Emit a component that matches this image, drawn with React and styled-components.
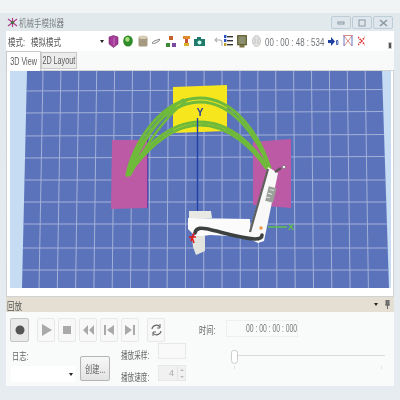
import React from "react";
import styled, { createGlobalStyle, css } from "styled-components";

const Global = createGlobalStyle`
  html, body { margin: 0; padding: 0; background: #e6ecef; }
  * { box-sizing: border-box; }
`;

const condensed = (origin = "left", x = 0.75) => css`
  display: inline-block;
  white-space: nowrap;
  transform: scaleX(${x});
  transform-origin: ${origin} center;
`;

const Page = styled.div`
  width: 400px;
  height: 400px;
  overflow: hidden;
  padding-top: 13px;
  background: linear-gradient(#f1f4f5 0, #f1f4f5 13px, #e2e9ec 13px, #e6ecef 100%);
  font-family: "Liberation Sans", "Noto Sans CJK SC", sans-serif;
  color: #666;
  filter: blur(0.45px);
`;
const TitleBar = styled.div`
  height: 18px;
  display: flex;
  align-items: center;
  padding: 0 7px 0 7px;
`;
const TitleWrap = styled.div`
  flex: 1;
  margin-left: 1px;
`;
const TitleText = styled.span`
  font-size: 10px;
  color: #7d8488;
  ${condensed()}
`;
const WinButton = styled.div`
  width: 20px;
  height: 13px;
  margin-left: 1px;
  margin-top: 1px;
  border: 1px solid #bdcdd8;
  border-radius: 2px;
  background: #dfe7ec;
  display: flex;
  align-items: center;
  justify-content: center;
`;
const Frame = styled.div`
  margin: 0 6px;
  height: 355px;
  display: flex;
  flex-direction: column;
  background: #fbfcfc;
`;
const Toolbar = styled.div`
  height: 20px;
  display: flex;
  align-items: center;
  padding-left: 2px;
  background: #fff;
  position: relative;
`;
const ToolSlot = styled.div`
  width: ${(p) => p.$w}px;
  flex: none;
`;
const ToolLabel = styled.span`
  font-size: 10px;
  color: #555;
  ${condensed()}
`;
const DropArrow = styled.span`
  width: 0;
  height: 0;
  flex: none;
  border-left: 2px solid transparent;
  border-right: 2px solid transparent;
  border-top: 3px solid #222;
`;
const ToolIcon = styled.svg`
  flex: none;
  display: block;
  margin-left: ${(p) => p.$ml || 0}px;
`;
const ClockSlot = styled.div`
  margin-left: 4px;
  width: 60px;
  flex: none;
`;
const Clock = styled.span`
  font-size: 10px;
  color: #6f7479;
  ${condensed("left", 0.79)}
`;
const Overflow = styled.div`
  position: absolute;
  right: 2px;
  top: 11px;
  width: 4px;
  height: 7px;
  background: #555;
  border: 1px solid #ccc;
`;
const TabStrip = styled.div`
  height: 19px;
  display: flex;
  align-items: flex-end;
  background: #f8f9f9;
  position: relative;
  z-index: 1;
`;
const Tab = styled.div`
  height: ${(p) => (p.$active ? 20 : 17)}px;
  width: ${(p) => (p.$active ? 35 : 36)}px;
  margin-bottom: ${(p) => (p.$active ? -1 : 1)}px;
  display: flex;
  align-items: center;
  justify-content: center;
  background: ${(p) => (p.$active ? "#fff" : "#ececec")};
  border: 1px solid #c9c9c9;
  border-bottom: ${(p) => (p.$active ? "none" : "1px solid #c9c9c9")};
`;
const TabText = styled.span`
  font-size: 10px;
  color: #5a5a5a;
  ${condensed("center", 0.72)}
`;
const ViewFrame = styled.div`
  height: 227px;
  padding: 0 2px 8px 3px;
  background: #fff;
  border: 1px solid #d2d2d2;
`;
const Scene = styled.svg`
  display: block;
  width: 381px;
  height: 217px;
  background: #c5dcf2;
`;
const PanelHeader = styled.div`
  height: 15px;
  background: #e5dfd3;
  display: flex;
  align-items: center;
  padding: 0 4px 0 1px;
  gap: 7px;
`;
const PanelTitleWrap = styled.div`
  flex: 1;
`;
const PanelTitle = styled.span`
  font-size: 10px;
  color: #555;
  ${condensed()}
`;
const PanelBody = styled.div`
  height: 74px;
  display: grid;
  grid-template-columns: 193px 1fr;
  background: #f9fafa;
`;
const LeftCol = styled.div`
  padding: 6px 0 0 4px;
  display: flex;
  flex-direction: column;
`;
const ButtonRow = styled.div`
  display: flex;
  height: 25px;
  align-items: flex-start;
`;
const PlayButton = styled.div`
  width: ${(p) => p.$w || 18}px;
  height: 24px;
  margin-left: ${(p) => p.$ml ?? 3}px;
  border: 1px solid ${(p) => (p.$on ? "#c6c6c6" : "#e8e8e8")};
  border-radius: 2px;
  background: ${(p) => (p.$on ? "#e9e9e9" : "#f8f8f8")};
  display: flex;
  align-items: center;
  justify-content: center;
`;
const LowerRow = styled.div`
  display: flex;
  height: 39px;
  padding-left: 1px;
`;
const LogCol = styled.div`
  width: 64px;
  display: flex;
  flex-direction: column;
  justify-content: flex-end;
`;
const FieldLabelSlot = styled.div`
  height: 14px;
  margin: 0 0 4px 1px;
  line-height: 14px;
`;
const FieldLabel = styled.span`
  font-size: 10px;
  color: #666;
  ${condensed("left", 0.72)}
`;
const Select = styled.div`
  height: 16px;
  background: #fff;
  display: flex;
  align-items: center;
  justify-content: flex-end;
  padding-right: 2px;
`;
const CreateButton = styled.div`
  width: 30px;
  height: 25px;
  margin: 13px 0 0 5px;
  border: 1px solid #b5b5b5;
  border-radius: 2px;
  background: linear-gradient(#f7f7f7, #e3e3e3);
  display: flex;
  align-items: center;
  justify-content: center;
`;
const CreateText = styled.span`
  font-size: 10px;
  color: #666;
  ${condensed("center", 0.72)}
`;
const FormCol = styled.div`
  margin-left: 11px;
  display: flex;
  flex-direction: column;
  gap: 6px;
`;
const FormRow = styled.div`
  display: flex;
  align-items: center;
  height: 16px;
`;
const FormLabelSlot = styled.div`
  width: 37px;
  padding-top: 6px;
`;
const FormLabel = styled.span`
  font-size: 10px;
  color: #666;
  ${condensed("left", 0.66)}
`;
const Field = styled.div`
  width: 28px;
  height: 16px;
  border: 1px solid #e8e8e8;
  background: ${(p) => (p.$dim ? "#f1f1f1" : "#f9f9f9")};
  display: flex;
  align-items: center;
  justify-content: flex-end;
  font-size: 9px;
  color: #aaa;
`;
const Spin = styled.span`
  width: 8px;
  height: 14px;
  margin-left: 3px;
  border-left: 1px solid #e4e4e4;
  display: flex;
  flex-direction: column;
  align-items: center;
  justify-content: space-around;
`;
const SpinArrow = styled.i`
  width: 0;
  height: 0;
  border-left: 2px solid transparent;
  border-right: 2px solid transparent;
  ${(p) => (p.$up ? "border-bottom" : "border-top")}: 2px solid #bbb;
`;
const RightCol = styled.div`
  display: flex;
  flex-direction: column;
  padding-top: 8px;
`;
const TimeRow = styled.div`
  display: flex;
  align-items: center;
  height: 17px;
`;
const TimeLabelSlot = styled.div`
  width: 27px;
`;
const TimeLabel = styled.span`
  font-size: 10px;
  color: #666;
  ${condensed("left", 0.72)}
`;
const TimeField = styled.div`
  width: 72px;
  height: 17px;
  border: 1px solid #efefef;
  display: flex;
  align-items: center;
  justify-content: flex-end;
`;
const TimeValue = styled.span`
  font-size: 10px;
  color: #777;
  flex: none;
  ${condensed("right", 0.68)}
`;
const Slider = styled.div`
  position: relative;
  height: 20px;
  margin: 13px 0 0 32px;
  width: 154px;
`;
const Track = styled.div`
  position: absolute;
  left: 6px;
  right: 0;
  top: 5px;
  height: 1px;
  background: #dcdcdc;
`;
const Thumb = styled.div`
  position: absolute;
  left: 0;
  top: 0;
  width: 7px;
  height: 14px;
  background: #fff;
  border: 1px solid #ccc;
  border-radius: 3px 3px 4px 4px;
`;
const Tick = styled.div`
  position: absolute;
  ${(p) => (p.$end ? "right: 3px" : "left: 3px")};
  top: 16px;
  width: 1px;
  height: 3px;
  background: #e2e2e2;
`;

const cols = Array.from({ length: 19 }, (_, i) => i);
const rows = [20, 42, 65, 87, 109, 131, 153, 177, 199];

function Grid() {
  return (
    <g stroke="#a3b1d8" strokeWidth="1" fill="none" clipPath="url(#floor)">
      {cols.map((i) => (
        <line key={i} x1={33 + i * 17.9} y1="0" x2={29 + i * 18.3} y2="217" />
      ))}
      {rows.map((y, i) => (
        <line key={y} x1="10" y1={y} x2="380" y2={y - (i < 4 ? 1.5 : 0)} />
      ))}
    </g>
  );
}

/* scene coordinates are page coordinates minus (10, 71) */
function SceneArt() {
  return (
    <Scene viewBox="0 0 381 217">
      <defs>
        <clipPath id="floor">
          <polygon points="17,0 372,0 379,217 12,217" />
        </clipPath>
      </defs>
      <polygon points="17,0 372,0 379,217 12,217" fill="#5b73bb" />
      <Grid />
      <polygon points="163,16 217,14 217,60 163,62" fill="#f6e61e" />
      <polygon points="102,69 137,69 137,137 101,138" fill="#bd5aa5" />
      <line x1="137.5" y1="69" x2="137.5" y2="137" stroke="#6a3fa5" strokeWidth="1" />
      <polygon points="243,71 281,68 281,137 243,134" fill="#bd5aa5" />
      <g fill="none" stroke="#6fba3a" strokeWidth="3" strokeLinecap="round">
        <path d="M117 104 C122 75 150 27 190 27 C225 27 250 65 260 97" />
        <path d="M118 104 C124 79 152 31 190 31 C223 31 248 67 259 97" />
        <path d="M118 104 C128 84 155 51 190 51 C220 51 245 75 257 97" />
        <path d="M118 104 C130 87 157 54 190 54 C218 54 243 77 256 97" />
        <path d="M120 99 C130 75 150 42 173 29" />
        <path d="M120 104 C134 78 152 48 176 30" strokeWidth="2.4" />
      </g>
      <line x1="187.5" y1="47" x2="187.5" y2="146" stroke="#2140a8" strokeWidth="1.4" />
      <text x="190" y="45" fontSize="10" fontWeight="700" fill="#1e3a9e" fontFamily="Liberation Sans" textAnchor="middle">Y</text>
      <line x1="258" y1="156" x2="277" y2="156" stroke="#5fc04a" strokeWidth="1.5" />
      <text x="278" y="159" fontSize="9" fontWeight="700" fill="#62c24a" fontFamily="Liberation Sans">X</text>

      <polygon points="179,140 201,140 202,147 179,148" fill="#e8e8e4" />
      <polygon points="178,147 240,148 241,166 200,164 186,166 178,158" fill="#fbfbfb" />
      <polygon points="182,165 195,165 195,180 186,184 183,176" fill="#e4e4de" />
      <polygon points="258,96 268,102 254,170 248,172 238,167 240,158" fill="#f8f8f8" />
      <path d="M240 161 L258 98" stroke="#5e605e" strokeWidth="2.2" fill="none" />
      <path d="M185 162 C186 156 192 157 198 158 C215 162 230 167 245 168 C250 168 252 166 252 164" stroke="#3c403e" strokeWidth="3.6" fill="none" strokeLinecap="round" />
      <rect x="257" y="116" width="8" height="15" fill="#9aa09a" transform="rotate(14 261 123)" />
      <path d="M259 119h4M258 123h4M257 127h4" stroke="#e8e8e8" transform="rotate(14 261 123)" />
      <line x1="265" y1="101" x2="271" y2="97" stroke="#555" strokeWidth="2.2" />
      <circle cx="274" cy="96" r="1.6" fill="#fff" stroke="#777" strokeWidth="0.8" />
      <circle cx="251" cy="157" r="1.7" fill="#e89a3c" />
      <path d="M181 170 L184 162 M179 166 L186 166 M182 166 L184 172" stroke="#e01818" strokeWidth="1.5" />
    </Scene>
  );
}

const Dash = () => <svg width="8" height="6"><rect x="1" y="2" width="6" height="2" fill="none" stroke="#8a98a2" /></svg>;
const Restore = () => <svg width="8" height="8"><rect x="1" y="1" width="6" height="6" fill="none" stroke="#8a98a2" /></svg>;
const Close = () => <svg width="9" height="8"><path d="M1 1l7 6M8 1L1 7" stroke="#8a98a2" strokeWidth="1.6" /></svg>;

const G = "#a9a9a9";
export default function App() {
  return (
    <Page>
      <Global />
      <TitleBar>
        <svg width="11" height="11" viewBox="0 0 11 11"><path d="M5.5 1v9M1 2l9 7M10 2L1 9" stroke="#b23a8a" strokeWidth="1.2" /><circle cx="5.5" cy="5.5" r="1.6" fill="#3a7a3a" /></svg>
        <TitleWrap><TitleText>机械手模拟器</TitleText></TitleWrap>
        <WinButton><Dash /></WinButton>
        <WinButton><Restore /></WinButton>
        <WinButton><Close /></WinButton>
      </TitleBar>
      <Frame>
        <Toolbar>
          <ToolSlot $w={23}><ToolLabel>模式:</ToolLabel></ToolSlot>
          <ToolSlot $w={69}><ToolLabel>模拟模式</ToolLabel></ToolSlot>
          <DropArrow />
          <ToolIcon $ml={4} width="11" height="13" viewBox="0 0 11 13"><path d="M1 2l4.5-1.5L10 2v7l-4.5 3.5L1 9z" fill="#a23a96" stroke="#6e2a70" strokeWidth=".6" /><path d="M6 2.5v8" stroke="#c874c0" /></ToolIcon>
          <ToolIcon $ml={4} width="10" height="12" viewBox="0 0 10 12"><ellipse cx="5" cy="6" rx="4.8" ry="5.6" fill="#2f8a2a" /><ellipse cx="4.4" cy="4.4" rx="2.2" ry="2.4" fill="#a9df7a" /></ToolIcon>
          <ToolIcon $ml={5} width="10" height="12" viewBox="0 0 10 12"><rect x="0.5" y="1.5" width="9" height="10" rx="1.5" fill="#a79a82" /><ellipse cx="5" cy="2.2" rx="4.5" ry="1.8" fill="#d8cdb4" /></ToolIcon>
          <ToolIcon $ml={4} width="8" height="6" viewBox="0 0 8 6"><path d="M0 5l2-2 6-2-1 2-5 3z" fill="#eee" stroke="#666" strokeWidth=".7" /></ToolIcon>
          <ToolIcon $ml={6} width="10" height="11" viewBox="0 0 10 11"><rect x="3" y="0" width="4" height="4" fill="#c0622a" /><rect x="0" y="7" width="4" height="4" fill="#3a8a3a" /><rect x="6" y="7" width="4" height="4" fill="#7a4aa0" /></ToolIcon>
          <ToolIcon $ml={6} width="9" height="12" viewBox="0 0 9 12"><rect x="1" y="1" width="7" height="3" fill="#e08a2a" /><rect x="3" y="4" width="3" height="4" fill="#c8503a" /><rect x="2" y="8" width="5" height="3" fill="#d8b02a" /></ToolIcon>
          <ToolIcon $ml={3} width="11" height="9" viewBox="0 0 11 9"><rect y="2" width="11" height="7" fill="#1f7a6a" /><rect x="3" y="0" width="4" height="2" fill="#1f7a6a" /><circle cx="5.5" cy="5.5" r="2" fill="#cfe" /></ToolIcon>
          <ToolIcon $ml={9} width="9" height="9" viewBox="0 0 9 9"><path d="M3 1L1 3l2 2M1 3h4.5C7 3 8 4 8 5.5V9" fill="none" stroke="#b0b0b0" strokeWidth="1.1" /></ToolIcon>
          <ToolIcon $ml={1} width="9" height="12" viewBox="0 0 9 12"><g fill="#333"><rect x="3" y="1" width="6" height="1.4" /><rect x="3" y="5" width="6" height="1.4" /><rect x="3" y="9" width="6" height="1.4" /></g><rect y="0" width="2.4" height="3" fill="#2a50c0" /><rect y="4" width="2.4" height="3" fill="#2a50c0" /><rect y="8" width="2.4" height="3" fill="#c0a02a" /></ToolIcon>
          <ToolIcon $ml={4} width="10" height="13" viewBox="0 0 10 13"><rect x="0.7" y="0.7" width="8.6" height="9" fill="#8a8f70" stroke="#5f5a28" strokeWidth="1.2" /><rect x="2.5" y="10" width="5" height="2.5" fill="#7a7440" /></ToolIcon>
          <ToolIcon $ml={5} width="9" height="12" viewBox="0 0 9 12"><ellipse cx="4.5" cy="6" rx="4" ry="5.5" fill="#e2e2e0" stroke="#c8c8c6" /><path d="M3 3v6M6 3v6" stroke="#c4c4c2" /></ToolIcon>
          <ClockSlot><Clock>00 : 00 : 48 : 534</Clock></ClockSlot>
          <ToolIcon $ml={3} width="11" height="9" viewBox="0 0 11 9"><path d="M0 3h3V0l4 4.5L3 9V6H0z" fill="#1d3fa0" /><path d="M8.5 3.5h1.4v4H8.5z" fill="none" stroke="#1d3fa0" strokeWidth=".8" /></ToolIcon>
          <ToolIcon $ml={4} width="10" height="12" viewBox="0 0 10 12"><path d="M0 .5h10M1 1l8 10M9 1L1 11" stroke="#d88" strokeWidth="1" fill="none" /><path d="M1 1v10M9 1v10" stroke="#6878c8" /></ToolIcon>
          <ToolIcon $ml={5} width="7" height="10" viewBox="0 0 7 10"><path d="M0 9L7 1M0 1l7 8" stroke="#e03030" strokeWidth="1.6" strokeDasharray="1.5 1" /></ToolIcon>
          <Overflow />
        </Toolbar>
        <TabStrip>
          <Tab $active><TabText>3D View</TabText></Tab>
          <Tab><TabText>2D Layout</TabText></Tab>
        </TabStrip>
        <ViewFrame>
          <SceneArt />
        </ViewFrame>
        <PanelHeader>
          <PanelTitleWrap><PanelTitle>回放</PanelTitle></PanelTitleWrap>
          <DropArrow />
          <svg width="5" height="9" viewBox="0 0 5 9"><path d="M1 0h3v5H1zM0 5h5M2.5 5v4" fill="#777" stroke="#666" /></svg>
        </PanelHeader>
        <PanelBody>
          <LeftCol>
            <ButtonRow>
              <PlayButton $on $w={19} $ml={0}><svg width="10" height="10"><circle cx="5" cy="5" r="4.5" fill="#555" /></svg></PlayButton>
              <PlayButton $ml={8}><svg width="11" height="12"><path d="M1 0l10 6-10 6z" fill={G} /></svg></PlayButton>
              <PlayButton><svg width="8" height="8"><rect width="8" height="8" fill={G} /></svg></PlayButton>
              <PlayButton><svg width="11" height="10"><path d="M5 0v10L0 5zM11 0v10L6 5z" fill={G} /></svg></PlayButton>
              <PlayButton><svg width="10" height="10"><path d="M0 0h2v10H0zM10 0v10L3 5z" fill={G} /></svg></PlayButton>
              <PlayButton><svg width="10" height="10"><path d="M10 0H8v10h2zM0 0v10l7-5z" fill={G} /></svg></PlayButton>
              <PlayButton $ml={8}><svg width="11" height="12" viewBox="0 0 11 12"><path d="M1 5a4.5 4.5 0 0 1 8-2M10 7a4.5 4.5 0 0 1-8 2" fill="none" stroke="#666" strokeWidth="1.2" /><path d="M9 0v4H6M2 12V8h3" fill="none" stroke="#666" /></svg></PlayButton>
            </ButtonRow>
            <LowerRow>
              <LogCol>
                <FieldLabelSlot><FieldLabel>日志:</FieldLabel></FieldLabelSlot>
                <Select><DropArrow /></Select>
              </LogCol>
              <CreateButton><CreateText>创建...</CreateText></CreateButton>
              <FormCol>
                <FormRow><FormLabelSlot><FormLabel>播放采样:</FormLabel></FormLabelSlot><Field /></FormRow>
                <FormRow><FormLabelSlot><FormLabel>播放速度:</FormLabel></FormLabelSlot><Field $dim>4<Spin><SpinArrow $up /><SpinArrow /></Spin></Field></FormRow>
              </FormCol>
            </LowerRow>
          </LeftCol>
          <RightCol>
            <TimeRow>
              <TimeLabelSlot><TimeLabel>时间:</TimeLabel></TimeLabelSlot>
              <TimeField><TimeValue>00 : 00 : 00 : 000</TimeValue></TimeField>
            </TimeRow>
            <Slider>
              <Track />
              <Thumb />
              <Tick />
              <Tick $end />
            </Slider>
          </RightCol>
        </PanelBody>
      </Frame>
    </Page>
  );
}
